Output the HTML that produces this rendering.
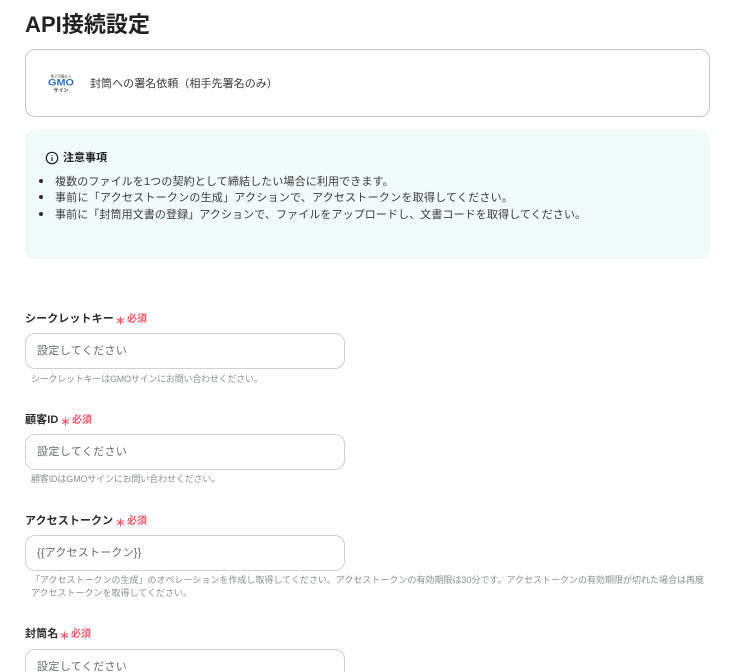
<!DOCTYPE html>
<html lang="ja">
<head>
<meta charset="utf-8">
<style>
html,body{margin:0;padding:0;background:#fff;width:754px;height:672px;overflow:hidden}
body{position:relative;font-family:"Liberation Sans","Noto Sans CJK JP",sans-serif;color:#3a3a3a}
.a{position:absolute;white-space:nowrap}
.title{left:25px;top:9px;font-size:22px;line-height:32px;font-weight:700;color:#222;letter-spacing:.05px}
.card{left:25px;top:49px;width:683px;height:66px;border:1px solid #c8c8c8;border-radius:10px}
.note{left:25px;top:130px;width:685px;height:129px;background:#f1fbfa;border-radius:10px}
.t{font-size:11px;line-height:16px}
.lab{font-size:11px;line-height:16px;font-weight:700;color:#2d2d2d;letter-spacing:.1px}
.req{font-size:10px;line-height:16px;font-weight:700;color:#f4566c}
.ast{width:9px;height:9px}
.inp{left:25px;width:318px;height:34px;border:1px solid #cdd1d9;border-radius:10px;background:#fff}
.ph{left:37px;font-size:11px;line-height:16px;color:#666a70;letter-spacing:.35px}
.help{font-size:9px;line-height:14px;color:#8a8f94}
.dot{left:39px;width:4px;height:4px;border-radius:50%;background:#2d2d2d}
</style>
</head>
<body>
<div class="a title">API接続設定</div>
<div class="a card"></div>
<svg class="a" style="left:47px;top:72px" width="28" height="22" viewBox="0 0 28 22">
<text x="14" y="5.5" text-anchor="middle" font-family="Noto Sans CJK JP" font-size="3.5" fill="#555">電子印鑑なら</text>
<text x="14" y="13.5" text-anchor="middle" font-family="Liberation Sans" font-size="9" font-weight="700" fill="#2a6fc0" textLength="26" lengthAdjust="spacingAndGlyphs">GMO</text>
<text x="14" y="20" text-anchor="middle" font-family="Noto Sans CJK JP" font-size="5" font-weight="700" fill="#444">サイン</text>
</svg>
<div class="a t" style="left:90px;top:76px;letter-spacing:.05px">封筒への署名依頼（相手先署名のみ）</div>

<div class="a note"></div>
<svg class="a" style="left:45px;top:151px" width="14" height="14" viewBox="0 0 14 14" fill="none" stroke="#222" stroke-width="1.2">
<circle cx="7" cy="7" r="5.7"/>
<path d="M7 6.2V10"/>
<path d="M7 4V5"/>
</svg>
<div class="a t" style="left:63px;top:150px;font-weight:700;color:#222">注意事項</div>
<div class="a dot" style="top:179px"></div>
<div class="a dot" style="top:195px"></div>
<div class="a dot" style="top:212px"></div>
<div class="a t" style="left:55px;top:174px;letter-spacing:.13px">複数のファイルを1つの契約として締結したい場合に利用できます。</div>
<div class="a t" style="left:55px;top:190px;letter-spacing:.24px">事前に「アクセストークンの生成」アクションで、アクセストークンを取得してください。</div>
<div class="a t" style="left:55px;top:207px;letter-spacing:.1px">事前に「封筒用文書の登録」アクションで、ファイルをアップロードし、文書コードを取得してください。</div>

<div class="a lab" style="left:25px;top:311px">シークレットキー</div>
<svg class="a ast" style="left:116px;top:316px" viewBox="0 0 9 9" stroke="#f4566c" stroke-width="1.2"><path d="M4.5 .5V8.5M1 2.5L8 6.5M1 6.5L8 2.5"/></svg>
<div class="a req" style="left:127px;top:312px">必須</div>
<div class="a inp" style="top:333px"></div>
<div class="a ph" style="top:343px">設定してください</div>
<div class="a help" style="left:31px;top:372px;letter-spacing:-.22px">シークレットキーはGMOサインにお問い合わせください。</div>

<div class="a lab" style="left:25px;top:412px">顧客ID</div>
<svg class="a ast" style="left:61px;top:417px" viewBox="0 0 9 9" stroke="#f4566c" stroke-width="1.2"><path d="M4.5 .5V8.5M1 2.5L8 6.5M1 6.5L8 2.5"/></svg>
<div class="a req" style="left:72px;top:413px">必須</div>
<div class="a inp" style="top:434px"></div>
<div class="a ph" style="top:444px">設定してください</div>
<div class="a help" style="left:31px;top:472px;letter-spacing:-.15px">顧客IDはGMOサインにお問い合わせください。</div>

<div class="a lab" style="left:25px;top:513px">アクセストークン</div>
<svg class="a ast" style="left:116px;top:518px" viewBox="0 0 9 9" stroke="#f4566c" stroke-width="1.2"><path d="M4.5 .5V8.5M1 2.5L8 6.5M1 6.5L8 2.5"/></svg>
<div class="a req" style="left:127px;top:514px">必須</div>
<div class="a inp" style="top:535px"></div>
<div class="a ph" style="top:545px;letter-spacing:.2px">{{アクセストークン}}</div>
<div class="a help" style="left:31px;top:573px">「アクセストークンの生成」のオペレーションを作成し取得してください。アクセストークンの有効期限は30分です。アクセストークンの有効期限が切れた場合は再度</div>
<div class="a help" style="left:31px;top:586px">アクセストークンを取得してください。</div>

<div class="a lab" style="left:25px;top:626px">封筒名</div>
<svg class="a ast" style="left:60px;top:631px" viewBox="0 0 9 9" stroke="#f4566c" stroke-width="1.2"><path d="M4.5 .5V8.5M1 2.5L8 6.5M1 6.5L8 2.5"/></svg>
<div class="a req" style="left:71px;top:627px">必須</div>
<div class="a inp" style="top:649px"></div>
<div class="a ph" style="top:659px">設定してください</div>
</body>
</html>
